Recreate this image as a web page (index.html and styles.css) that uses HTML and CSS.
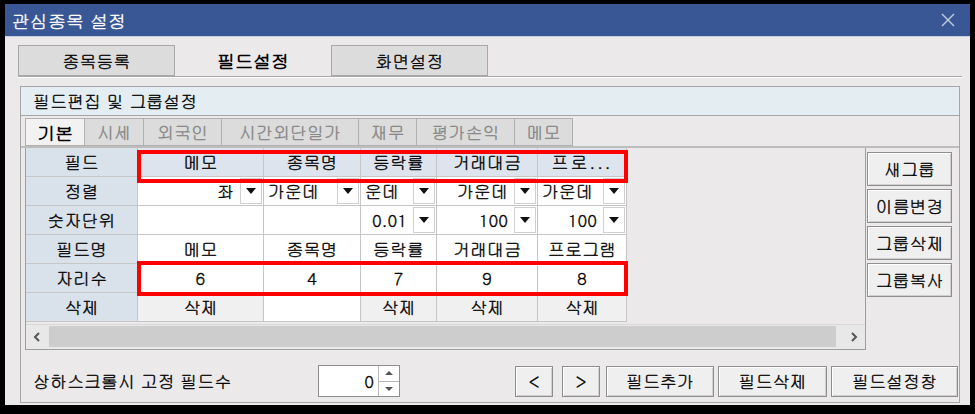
FILE: index.html
```html
<!DOCTYPE html>
<html lang="ko">
  <head>
    <meta charset="UTF-8" />
    <meta name="viewport" content="width=device-width, initial-scale=1.0" />
    <title>관심종목 설정</title>
    <link rel="stylesheet" href="styles.css">
  </head>
  <body>
    <div class="window">
      <div class="titlebar">
        <span class="title">관심종목 설정</span>
        <svg class="close-icon" width="14" height="14" viewBox="0 0 14 14">
          <path d="M1 1 L13 13 M13 1 L1 13" stroke="#c3cde0" stroke-width="1.4" fill="none" />
        </svg>
      </div>

      <div class="content">
        <div class="main-tabs">
          <div class="main-tab">종목등록</div>
          <div class="main-tab active">필드설정</div>
          <div class="main-tab">화면설정</div>
        </div>

        <div class="group">
          <div class="group-header">필드편집 및 그룹설정</div>

          <div class="sub-tabs">
            <div class="sub-tab active w-60">기본</div>
            <div class="sub-tab w-59">시세</div>
            <div class="sub-tab w-78">외국인</div>
            <div class="sub-tab w-137">시간외단일가</div>
            <div class="sub-tab w-58">재무</div>
            <div class="sub-tab w-98">평가손익</div>
            <div class="sub-tab w-58">메모</div>
          </div>

          <div class="editor">
            <div class="grid-panel">
              <div class="field-grid">
                <!-- 필드 -->
                <div class="cell label">필드</div>
                <div class="cell head">메모</div>
                <div class="cell head">종목명</div>
                <div class="cell head">등락률</div>
                <div class="cell head">거래대금</div>
                <div class="cell head dots">프로...</div>

                <!-- 정렬 -->
                <div class="cell label">정렬</div>
                <div class="cell combo"><span class="combo-text right">좌</span><span class="combo-btn"></span></div>
                <div class="cell combo"><span class="combo-text">가운데</span><span class="combo-btn"></span></div>
                <div class="cell combo"><span class="combo-text">운데</span><span class="combo-btn"></span></div>
                <div class="cell combo"><span class="combo-text right">가운데</span><span class="combo-btn"></span></div>
                <div class="cell combo"><span class="combo-text">가운데</span><span class="combo-btn"></span></div>

                <!-- 숫자단위 -->
                <div class="cell label">숫자단위</div>
                <div class="cell"></div>
                <div class="cell"></div>
                <div class="cell combo"><span class="combo-text right">0.01</span><span class="combo-btn"></span></div>
                <div class="cell combo"><span class="combo-text right">100</span><span class="combo-btn"></span></div>
                <div class="cell combo"><span class="combo-text right">100</span><span class="combo-btn"></span></div>

                <!-- 필드명 -->
                <div class="cell label">필드명</div>
                <div class="cell">메모</div>
                <div class="cell">종목명</div>
                <div class="cell">등락률</div>
                <div class="cell">거래대금</div>
                <div class="cell">프로그램</div>

                <!-- 자리수 -->
                <div class="cell label">자리수</div>
                <div class="cell">6</div>
                <div class="cell">4</div>
                <div class="cell">7</div>
                <div class="cell">9</div>
                <div class="cell">8</div>

                <!-- 삭제 -->
                <div class="cell label">삭제</div>
                <div class="cell delete">삭제</div>
                <div class="cell"></div>
                <div class="cell delete">삭제</div>
                <div class="cell delete">삭제</div>
                <div class="cell delete">삭제</div>
              </div>

              <div class="hscroll">
                <span class="scroll-arrow">
                  <svg width="8" height="10" viewBox="0 0 8 10"><path d="M6 1 L2 5 L6 9" stroke="#555" stroke-width="2" fill="none" /></svg>
                </span>
                <span class="scroll-thumb"></span>
                <span class="scroll-arrow">
                  <svg width="8" height="10" viewBox="0 0 8 10"><path d="M2 1 L6 5 L2 9" stroke="#555" stroke-width="2" fill="none" /></svg>
                </span>
              </div>

              <div class="mark mark-head"></div>
              <div class="mark mark-size"></div>
            </div>

            <div class="side-buttons">
              <button class="btn">새그룹</button>
              <button class="btn">이름변경</button>
              <button class="btn">그룹삭제</button>
              <button class="btn">그룹복사</button>
            </div>
          </div>

          <div class="footer">
            <span class="footer-label">상하스크롤시 고정 필드수</span>
            <div class="spin">
              <span class="spin-value">0</span>
              <span class="spin-buttons">
                <span class="spin-up"></span>
                <span class="spin-down"></span>
              </span>
            </div>
            <div class="footer-buttons">
              <button class="btn w-38">&lt;</button>
              <button class="btn w-38 gap-9">&gt;</button>
              <button class="btn w-108 gap-6">필드추가</button>
              <button class="btn w-109">필드삭제</button>
              <button class="btn w-127">필드설정창</button>
            </div>
          </div>
        </div>
      </div>
    </div>
  </body>
</html>
```

FILE: styles.css
```css
*,
*::before,
*::after {
  box-sizing: border-box;
}

body {
  margin: 0;
  background: #000;
  font-family: Gulim, "Noto Sans CJK KR", sans-serif;
  font-size: 17px;
  color: #000;
  /* heavier strokes, closer to the bitmap system font */
  -webkit-text-stroke: 0.35px currentColor;
}

.window {
  width: 965px;
  height: 401px;
  margin: 4px 0 0 5px;
  background: #ebe9ea;
  display: flex;
  flex-direction: column;
}

/* title bar */
.titlebar {
  height: 33px;
  flex: none;
  background: #3a5795;
  border-bottom: 1px solid #c7d1e2;
  display: flex;
  align-items: center;
  justify-content: space-between;
  padding: 0 15px 0 7px;
  color: #fff;
}

.title {
  font-size: 18px;
}

/* main tabs */
.content {
  flex: 1;
  padding: 8px 8px 0 13px;
  display: flex;
  flex-direction: column;
}

.main-tabs {
  display: flex;
  height: 32px;
  border-bottom: 1px solid #a9a9a9;
  box-shadow: 0 1px 0 #fff;
}

.main-tab {
  width: 157px;
  height: 31px;
  display: grid;
  place-items: center;
  background: #dcdcdc;
  border: 1px solid #a8a8a8;
}

.main-tab.active {
  width: 156px;
  background: transparent;
  border-color: transparent;
  font-weight: bold;
  font-size: 18px;
  -webkit-text-stroke: 0;
}

/* group box */
.group {
  margin: 9px 2px 0 2px;
  height: 317px;
  border: 1px solid #a6a6a6;
  display: flex;
  flex-direction: column;
}

.group-header {
  height: 29px;
  flex: none;
  background: #e4eef2;
  border-bottom: 1px solid #a6a6a6;
  padding-left: 12px;
  display: flex;
  align-items: center;
}

.sub-tabs {
  display: flex;
  height: 30px;
  margin-top: 2px;
  padding-left: 4px;
  border-bottom: 2px solid #bdbdbd;
  flex: none;
}

.sub-tab {
  height: 28px;
  display: grid;
  place-items: center;
  background: #dcdcdc;
  border: 1px solid #b0b0b0;
  border-left: none;
  color: #858585;
}

.sub-tab.active {
  background: #f2f2f2;
  border-left: 1px solid #b0b0b0;
  color: #000;
  font-weight: bold;
  font-size: 18px;
  -webkit-text-stroke: 0;
}

.w-60 { width: 60px; }
.w-59 { width: 59px; }
.w-78 { width: 78px; }
.w-137 { width: 137px; }
.w-58 { width: 58px; }
.w-98 { width: 98px; }

/* field grid */
.editor {
  display: flex;
  gap: 1px;
  padding-left: 4px;
  height: 202px;
  flex: none;
}

.grid-panel {
  position: relative;
  width: 841px;
  border: 1px solid #9e9e9e;
  border-top: none;
  display: flex;
  flex-direction: column;
}

.field-grid {
  display: grid;
  grid-template-columns: 112px 126px 97px 76px 101px 89px;
  grid-auto-rows: 29px;
  height: 174px;
}

.cell {
  display: flex;
  align-items: center;
  justify-content: center;
  background: #fff;
  border-right: 1px solid #c6c6c6;
  border-bottom: 1px solid #c6c6c6;
  overflow: hidden;
  white-space: nowrap;
  line-height: 1;
}

.cell.label {
  background: #d9e1eb;
}

.cell.head {
  background: #dde4ed;
}

.cell.dots {
  letter-spacing: 2px;
}

.cell.delete {
  background: #f0f0f0;
}

.cell.combo {
  justify-content: flex-end;
}

.combo-text {
  flex: 1;
  padding-left: 4px;
  text-align: left;
}

.combo-text.right {
  text-align: right;
  padding-right: 6px;
}

.combo-btn {
  width: 22px;
  height: 26px;
  margin: 0 1px 0 0;
  flex: none;
  border: 1px solid #d0d0d0;
  display: grid;
  place-items: center;
}

.combo-btn::after {
  content: "";
  border-left: 5px solid transparent;
  border-right: 5px solid transparent;
  border-top: 6px solid #111;
}

/* horizontal scrollbar */
.hscroll {
  margin-top: 2px;
  height: 24px;
  display: flex;
  align-items: stretch;
  background: #e8e8e8;
  border-top: 1px solid #d8d8d8;
}

.scroll-arrow {
  width: 22px;
  display: grid;
  place-items: center;
}

.scroll-thumb {
  flex: 1;
  margin: 1px 7px 1px 1px;
  background: #cdcdcd;
}

/* red highlight boxes laid over the grid */
.mark {
  position: absolute;
  left: 111px;
  width: 491px;
  border: 4px solid #f00;
  pointer-events: none;
}

.mark-head {
  top: 2px;
  height: 33px;
}

.mark-size {
  top: 113px;
  height: 35px;
}

/* buttons */
.btn {
  font: inherit;
  color: #000;
  background: #efefef;
  border: 1px solid #8e8e8e;
  box-shadow: inset 1px 1px 0 #fff, inset -1px -1px 0 #cfcfcf;
  padding: 0;
  height: 31px;
}

.side-buttons {
  display: flex;
  flex-direction: column;
  gap: 3px;
  padding-top: 4px;
}

.side-buttons .btn {
  width: 85px;
  height: 34px;
}

/* footer row */
.footer {
  flex: 1;
  display: flex;
  align-items: center;
  padding: 10px 1px 0 12px;
}

.footer-label {
  width: 285px;
}

.spin {
  width: 82px;
  height: 32px;
  display: flex;
  background: #fff;
  border: 1px solid #8e8e8e;
}

.spin-value {
  flex: 1;
  text-align: right;
  padding-right: 4px;
  line-height: 30px;
}

.spin-buttons {
  width: 21px;
  display: flex;
  flex-direction: column;
  border-left: 1px solid #b8b8b8;
}

.spin-up,
.spin-down {
  flex: 1;
  display: grid;
  place-items: center;
}

.spin-up {
  border-bottom: 1px solid #b8b8b8;
}

.spin-up::after {
  content: "";
  border-left: 4px solid transparent;
  border-right: 4px solid transparent;
  border-bottom: 4px solid #555;
}

.spin-down::after {
  content: "";
  border-left: 4px solid transparent;
  border-right: 4px solid transparent;
  border-top: 4px solid #555;
}

.footer-buttons {
  margin-left: auto;
  display: flex;
  gap: 4px;
}

.w-38 { width: 38px; }
.w-108 { width: 108px; }
.w-109 { width: 109px; }
.w-127 { width: 127px; }
.gap-9 { margin-left: 5px; }
.gap-6 { margin-left: 2px; }
```
